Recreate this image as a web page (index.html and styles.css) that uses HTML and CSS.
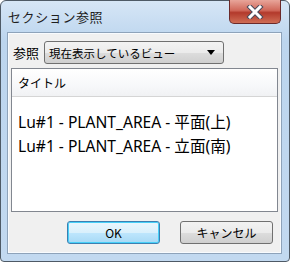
FILE: index.html
```html
<!DOCTYPE html>
<html lang="ja">
<head>
  <meta charset="UTF-8" />
  <title>セクション参照</title>
  <link rel="stylesheet" href="styles.css">
</head>
<body>
  <div class="window">
    <div class="titlebar">
      <span class="title">セクション参照</span>
      <button class="close-btn" title="閉じる">
        <svg width="20" height="14" viewBox="0 0 20 14">
          <path d="M5 2 L15 12 M15 2 L5 12" stroke="#4a4a5a" stroke-width="5" stroke-linecap="square"/>
          <path d="M5 2 L15 12 M15 2 L5 12" stroke="#ffffff" stroke-width="3" stroke-linecap="square"/>
        </svg>
      </button>
    </div>

    <div class="client">
      <div class="ref-row">
        <label class="ref-label">参照</label>
        <div class="combo">
          <span>現在表示しているビュー</span>
          <span class="combo-arrow"></span>
        </div>
      </div>

      <div class="listbox">
        <div class="list-header">タイトル</div>
        <ul class="list-items">
          <li>Lu#1 - PLANT_AREA - 平面(上)</li>
          <li>Lu#1 - PLANT_AREA - 立面(南)</li>
        </ul>
      </div>

      <div class="buttons">
        <button class="btn btn-default">OK</button>
        <button class="btn">キャンセル</button>
      </div>
    </div>
  </div>
</body>
</html>
```

FILE: styles.css
```css
body {
  margin: 0;
  font-family: "Noto Sans", "Noto Sans CJK JP", sans-serif;
  background: #ffffff;
}

.window {
  width: 290px;
  height: 262px;
  box-sizing: border-box;
  border: 1px solid #4e5a66;
  border-radius: 6px 6px 4px 4px;
  background: linear-gradient(#d6e6f6, #bcd5ee 40px, #c2d9f0);
  display: flex;
  flex-direction: column;
  padding: 0 7px 7px 6px;
}

.titlebar {
  height: 31px;
  display: flex;
  justify-content: space-between;
  align-items: flex-start;
}

.title {
  font-family: "Noto Sans CJK JP", sans-serif;
  font-size: 13px;
  letter-spacing: 0.6px;
  color: #1e1e1e;
  margin: 6px 0 0 1px;
}

.close-btn {
  width: 52px;
  height: 24px;
  margin-top: -1px;
  margin-right: 1px;
  border: 1px solid #6b2a2a;
  border-top: none;
  border-radius: 0 0 5px 5px;
  background: linear-gradient(#e8a59a, #d0685a 45%, #b33a2c 55%, #cf6d55);
  padding: 0;
  display: flex;
  align-items: center;
  justify-content: center;
}

.client {
  flex: 1;
  background: #f0f0f0;
  border: 1px solid #8ea3ba;
  box-shadow: inset 0 0 0 1px #f8fbfe;
  padding: 8px 3px 8px 3px;
  display: flex;
  flex-direction: column;
}

.ref-row {
  display: flex;
  align-items: center;
  gap: 5px;
  padding-left: 2px;
}

.ref-label {
  font-family: "Noto Sans CJK JP", sans-serif;
  font-size: 13px;
  color: #000;
}

.combo {
  width: 180px;
  height: 23px;
  box-sizing: border-box;
  border: 1px solid #707070;
  border-radius: 3px;
  background: linear-gradient(#f3f3f3, #ebebeb 50%, #dddddd 51%, #cfcfcf);
  display: flex;
  align-items: center;
  justify-content: space-between;
  padding: 0 8px 0 4px;
  font-family: "Noto Sans CJK JP", sans-serif;
  font-size: 11.5px;
  color: #000;
}

.combo-arrow {
  width: 0;
  height: 0;
  border-left: 4px solid transparent;
  border-right: 4px solid transparent;
  border-top: 5px solid #000;
}

.listbox {
  margin-top: 4px;
  height: 144px;
  box-sizing: border-box;
  border: 1px solid #828790;
  background: #ffffff;
}

.list-header {
  height: 28px;
  box-sizing: border-box;
  border-bottom: 1px solid #d5d5d5;
  background: linear-gradient(#ffffff, #f7f8fa 60%, #f1f2f4);
  font-family: "Noto Sans CJK JP", sans-serif;
  font-size: 12px;
  line-height: 28px;
  padding-left: 6px;
  color: #000;
}

.list-items {
  list-style: none;
  margin: 0;
  padding: 13px 0 0 6px;
}

.list-items li {
  font-size: 15.6px;
  line-height: 24px;
  color: #000;
}

.buttons {
  display: flex;
  justify-content: flex-end;
  gap: 20px;
  margin-top: 9px;
  padding-right: 5px;
}

.btn {
  width: 93px;
  height: 23px;
  border: 1px solid #707070;
  border-radius: 3px;
  background: linear-gradient(#f2f2f2, #ebebeb 50%, #dddddd 51%, #cfcfcf);
  font-family: "Noto Sans CJK JP", sans-serif;
  font-size: 12px;
  color: #000;
  padding: 0;
}

.btn-default {
  border-color: #3c7fb1;
  box-shadow: inset 0 0 0 1px #48d0f8;
  background: linear-gradient(#eaf6fd, #d9f0fc 50%, #bee6fd 51%, #a7d9f5);
}
```
